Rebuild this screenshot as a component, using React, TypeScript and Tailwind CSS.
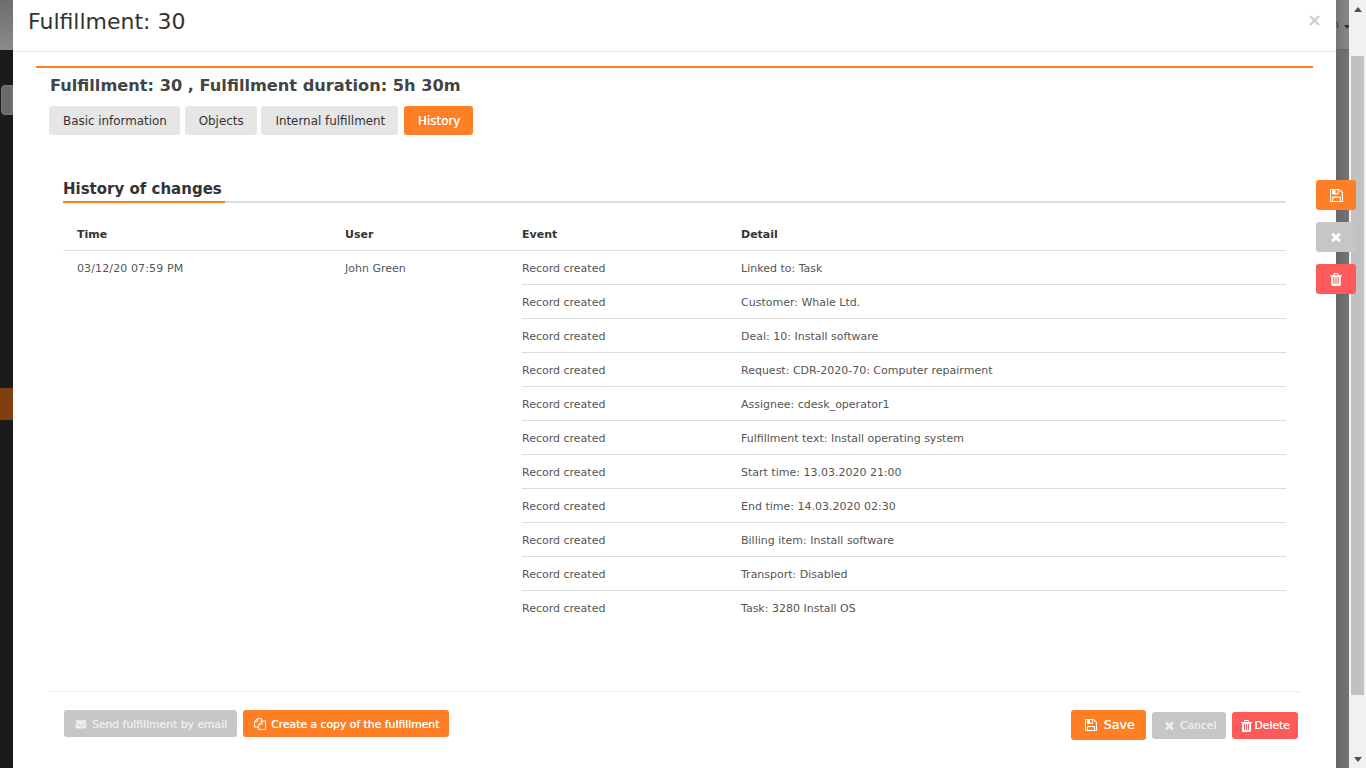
import { FaEnvelope } from "react-icons/fa";

const rows = [
  "Linked to: Task",
  "Customer: Whale Ltd.",
  "Deal: 10: Install software",
  "Request: CDR-2020-70: Computer repairment",
  "Assignee: cdesk_operator1",
  "Fulfillment text: Install operating system",
  "Start time: 13.03.2020 21:00",
  "End time: 14.03.2020 02:30",
  "Billing item: Install software",
  "Transport: Disabled",
  "Task: 3280 Install OS",
];

const tabs = ["Basic information", "Objects", "Internal fulfillment"];

type IconProps = { className?: string };

const SaveIcon = ({ className }: IconProps) => (
  <svg viewBox="128 128 1536 1536" fill="currentColor" className={className}>
    <path d="M512 1536h768v-384h-768v384zm896 0h128v-896q0-14-10-38.5t-20-34.5l-281-281q-10-10-34-20t-39-10v416q0 40-28 68t-68 28h-576q-40 0-68-28t-28-68v-416h-128v1280h128v-416q0-40 28-68t68-28h832q40 0 68 28t28 68v416zm-384-928v-320q0-13-9.5-22.5t-22.5-9.5h-192q-13 0-22.5 9.5t-9.5 22.5v320q0 13 9.5 22.5t22.5 9.5h192q13 0 22.5-9.5t9.5-22.5zm640 32v928q0 40-28 68t-68 28h-1344q-40 0-68-28t-28-68v-1344q0-40 28-68t68-28h928q40 0 88 20t76 48l280 280q28 28 48 76t20 88z" />
  </svg>
);

const TimesIcon = ({ className }: IconProps) => (
  <svg viewBox="240 240 1312 1312" fill="currentColor" className={className}>
    <path d="M1490 1322q0 40-28 68l-136 136q-28 28-68 28t-68-28l-294-294-294 294q-28 28-68 28t-68-28l-136-136q-28-28-28-68t28-68l294-294-294-294q-28-28-28-68t28-68l136-136q28-28 68-28t68 28l294 294 294-294q28-28 68-28t68 28l136 136q28 28 28 68t-28 68l-294 294 294 294q28 28 28 68z" />
  </svg>
);

const TrashIcon = ({ className }: IconProps) => (
  <svg viewBox="192 128 1408 1536" fill="currentColor" className={className}>
    <path d="M704 1376v-704q0-14-9-23t-23-9h-64q-14 0-23 9t-9 23v704q0 14 9 23t23 9h64q14 0 23-9t9-23zm256 0v-704q0-14-9-23t-23-9h-64q-14 0-23 9t-9 23v704q0 14 9 23t23 9h64q14 0 23-9t9-23zm256 0v-704q0-14-9-23t-23-9h-64q-14 0-23 9t-9 23v704q0 14 9 23t23 9h64q14 0 23-9t9-23zm-544-992h448l-48-117q-7-9-17-11h-317q-10 2-17 11zm928 32v64q0 14-9 23t-23 9h-96v948q0 83-47 143.5t-113 60.5h-832q-66 0-113-58.5t-47-141.5v-952h-96q-14 0-23-9t-9-23v-64q0-14 9-23t23-9h309l70-167q15-37 54-63t79-26h320q40 0 79 26t54 63l70 167h309q14 0 23 9t9 23z" />
  </svg>
);

const FilesIcon = ({ className }: IconProps) => (
  <svg viewBox="0 0 1792 1792" fill="currentColor" className={className}>
    <path d="M1696 384q40 0 68 28t28 68v1216q0 40-28 68t-68 28h-960q-40 0-68-28t-28-68v-288h-544q-40 0-68-28t-28-68v-672q0-40 20-88t48-76l408-408q28-28 76-48t88-20h416q40 0 68 28t28 68v328q68-40 128-40h416zm-544 213l-299 299h299v-299zm-640-384l-299 299h299v-299zm196 647l316-316v-416h-384v416q0 40-28 68t-68 28h-416v640h512v-256q0-40 20-88t48-76zm956 804v-1152h-384v416q0 40-28 68t-68 28h-416v640h896z" />
  </svg>
);

const App = () => {
  return (
    <div className="relative flex h-[768px] w-[1366px] overflow-hidden bg-[#1a1a1a] font-['DejaVu_Sans',sans-serif] text-[11px] text-[#555]">
      {/* backdrop, left of the modal */}
      <div className="flex w-[13px] shrink-0 flex-col">
        <div className="h-[50px] bg-gradient-to-b from-[#6e6e6e] to-[#8a8a8a]" />
        <div className="ml-px mt-[35px] h-[30px] rounded-l-sm border border-[#7a7a7a] bg-[#6a6a6a]" />
        <div className="mt-[273px] h-[32px] bg-[#7f3f12]" />
      </div>

      {/* modal */}
      <div className="flex w-[1323px] shrink-0 flex-col bg-white">
        <div className="flex h-[52px] shrink-0 items-start justify-between border-b border-[#e5e5e5] pl-[15px] pr-[16px]">
          <div className="mt-[7px] text-[22px] leading-[30px] text-[#333]">Fulfillment: 30</div>
          <svg viewBox="0 0 12 12" className="mt-[15px] h-[11px] w-[11px] text-[#ccc]" stroke="currentColor" strokeWidth="2.2">
            <path d="M1 1l10 10M11 1l-10 10" />
          </svg>
        </div>

        <div className="mx-[23px] mt-[14px] h-[2px] bg-[#ff7f27]" />

        <div className="ml-[37px] mt-[7px] text-[16.2px] font-bold leading-[22px] text-[#444]">
          Fulfillment: 30 , Fulfillment duration: 5h 30m
        </div>

        <div className="ml-[36px] mt-[9px] flex gap-[4.8px] text-[11.9px]">
          {tabs.map((t) => (
            <div key={t} className="flex h-[29px] items-center rounded-[3px] bg-[#e6e6e6] pl-[14px] pr-[13px] pt-[2px] text-[#333]">
              {t}
            </div>
          ))}
          <div className="ml-px flex h-[29px] items-center rounded-[3px] bg-[#ff7f27] pl-[14px] pr-[13px] pt-[2px] text-white [text-shadow:0_0_0.4px_#fff]">
            History
          </div>
        </div>

        <div className="mx-[50px] mt-[43px]">
          <div className="relative h-[25px] border-b-2 border-[#ddd] text-[15px] font-bold leading-[22px] text-[#333]">
            History of changes
            <div className="absolute -bottom-[2px] left-0 h-[2px] w-[162px] bg-[#ff7f27]" />
          </div>

          <div className="mt-[16px] grid h-[32px] grid-cols-[268px_177px_219px_1fr] items-center border-b border-[#ddd] px-[14px] pt-[2px] font-bold text-[#333]">
            <div>Time</div>
            <div>User</div>
            <div>Event</div>
            <div>Detail</div>
          </div>

          <div className="flex">
            <div className="w-[282px] shrink-0 pl-[14px] pt-[11px] leading-[14px] tracking-[0.12px]">03/12/20 07:59 PM</div>
            <div className="w-[177px] shrink-0 pt-[11px] leading-[14px]">John Green</div>
            <div className="flex-1">
              {rows.map((r, i) => (
                <div
                  key={r}
                  className={
                    i === rows.length - 1
                      ? "flex h-[34px] items-center pt-[3px]"
                      : "flex h-[34px] items-center border-b border-[#ddd] pt-[3px]"
                  }
                >
                  <div className="w-[219px] shrink-0">Record created</div>
                  <div>{r}</div>
                </div>
              ))}
            </div>
          </div>
        </div>

        <div className="mx-[35px] mt-[66px] flex items-start justify-between border-t border-[#eee] pl-[16px] pr-[3px] pt-[18px]">
          <div className="flex gap-[6px] text-[10.8px]">
            <div className="flex h-[27px] items-center gap-[5px] rounded-[3px] bg-[#c6c6c6] pl-[11px] pr-[10px] text-[#eee] [text-shadow:0_0_0.4px_#eee]">
              <FaEnvelope className="mt-[1px] w-[12px] shrink-0" />
              <span className="pt-[3px]">Send fulfillment by email</span>
            </div>
            <div className="flex h-[27px] items-center gap-[5px] rounded-[3px] bg-[#ff7f27] pl-[11px] pr-[10px] text-white [text-shadow:0_0_0.4px_#fff]">
              <FilesIcon className="mt-[1px] h-[12px] w-[12px] shrink-0" />
              <span className="pt-[3px]">Create a copy of the fulfillment</span>
            </div>
          </div>
          <div className="flex items-start gap-[6px] text-[10.8px]">
            <div className="flex h-[30px] items-center gap-[7px] rounded-[3px] bg-[#ff7f27] pl-[14px] pr-[11px] text-[12.7px] text-white [text-shadow:0_0_0.4px_#fff]">
              <SaveIcon className="h-[12px] w-[12px] shrink-0" />
              Save
            </div>
            <div className="mt-[2px] flex h-[27px] items-center gap-[6px] rounded-[3px] bg-[#c6c6c6] pl-[13px] pr-[9px] text-[#eee] [text-shadow:0_0_0.4px_#eee]">
              <TimesIcon className="h-[9px] w-[9px] shrink-0" />
              <span className="pt-[2px]">Cancel</span>
            </div>
            <div className="mt-[2px] flex h-[27px] items-center gap-[3px] rounded-[3px] bg-[#ff5a5a] pl-[9px] pr-[8px] text-white [text-shadow:0_0_0.4px_#fff]">
              <TrashIcon className="h-[12px] w-[11px] shrink-0" />
              <span className="pt-[2px]">Delete</span>
            </div>
          </div>
        </div>
      </div>

      {/* backdrop, right of the modal */}
      <div className="w-[13px] shrink-0 bg-gradient-to-r from-[#666] to-[#757575]">
        <div className="flex h-[50px] items-center gap-[5px] overflow-hidden border-b border-[#666] bg-gradient-to-r from-[#777] to-[#888] pt-[2px] text-[#333]">
          <span className="ml-[-4px]">n</span>
          <div className="mt-[2px] h-0 w-0 border-x-[3px] border-t-[4px] border-x-transparent border-t-[#333]" />
        </div>
      </div>

      {/* scrollbar */}
      <div className="flex w-[17px] shrink-0 flex-col items-center bg-[#f1f1f1]">
        <div className="mt-[7px] h-0 w-0 border-x-[4px] border-b-[5px] border-x-transparent border-b-[#505050]" />
        <div className="mt-[44px] h-[639px] w-[13px] bg-[#c1c1c1]" />
        <div className="mt-[62px] h-0 w-0 border-x-[4px] border-t-[5px] border-x-transparent border-t-[#505050]" />
      </div>

      {/* floating action buttons */}
      <div className="absolute left-[1316px] top-[180px] flex flex-col gap-[12px] text-white">
        <div className="flex h-[30px] w-[40px] items-center justify-center rounded-[3px] bg-[#ff7f27]">
          <SaveIcon className="h-[13px] w-[13px]" />
        </div>
        <div className="flex h-[30px] w-[40px] items-center justify-center rounded-[3px] bg-[#c6c6c6]">
          <TimesIcon className="h-[10px] w-[10px]" />
        </div>
        <div className="flex h-[30px] w-[40px] items-center justify-center rounded-[3px] bg-[#ff5a5a]">
          <TrashIcon className="h-[13px] w-[12px]" />
        </div>
      </div>
    </div>
  );
};

export default App;
